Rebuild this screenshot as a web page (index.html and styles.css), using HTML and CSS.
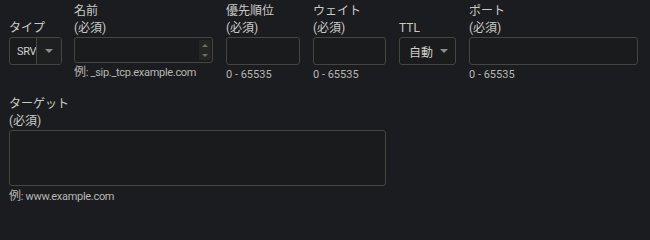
FILE: index.html
```html
<!DOCTYPE html>
<html lang="ja">
<head>
<meta charset="utf-8">
<link rel="stylesheet" href="styles.css">
</head>
<body>
<div class="form">
  <div class="row">
    <div class="field f-type">
      <div class="label"><span>タイプ</span></div>
      <div class="select split">
        <span class="sel-text">SRV</span>
        <span class="sel-btn"><span class="tri"></span></span>
      </div>
    </div>
    <div class="field f-name">
      <div class="label"><span>名前</span><span>(必須)</span></div>
      <div class="input num">
        <span class="spin"><span class="up"></span><span class="down"></span></span>
      </div>
      <div class="hint long"><span class="cjk">例</span>: _sip._tcp.example.com</div>
    </div>
    <div class="field f-prio">
      <div class="label"><span>優先順位</span><span>(必須)</span></div>
      <div class="input tall"></div>
      <div class="hint">0 - 65535</div>
    </div>
    <div class="field f-weight">
      <div class="label"><span>ウェイト</span><span>(必須)</span></div>
      <div class="input tall"></div>
      <div class="hint">0 - 65535</div>
    </div>
    <div class="field f-ttl">
      <div class="label"><span>TTL</span></div>
      <div class="select plain">
        <span class="sel-text">自動</span>
        <span class="tri"></span>
      </div>
    </div>
    <div class="field f-port">
      <div class="label"><span>ポート</span><span>(必須)</span></div>
      <div class="input tall"></div>
      <div class="hint">0 - 65535</div>
    </div>
  </div>
  <div class="field f-target">
    <div class="label"><span>ターゲット</span><span>(必須)</span></div>
    <div class="textarea"></div>
    <div class="hint long"><span class="cjk">例</span>: www.example.com</div>
  </div>
</div>
</body>
</html>
```

FILE: styles.css
```css
html, body {
  margin: 0;
  padding: 0;
  background: #1b1c1f;
}
body {
  width: 650px;
  height: 210px;
  overflow: hidden;
  font-family: Roboto, "Noto Sans CJK JP", sans-serif;
  font-size: 12px;
  color: #c9c9c6;
}
.form {
  padding: 2px 9px 0 9px;
}
.row {
  display: flex;
  align-items: flex-start;
}
.field {
  display: flex;
  flex-direction: column;
}
.label {
  height: 35px;
  display: flex;
  flex-direction: column;
  justify-content: flex-end;
  line-height: 17px;
  color: #cacac7;
}
.f-type { width: 53px; }
.f-name { width: 139px; margin-left: 12px; }
.f-prio { width: 74px; margin-left: 13px; }
.f-weight { width: 73px; margin-left: 13px; }
.f-ttl { width: 57px; margin-left: 13px; }
.f-port { width: 169px; margin-left: 13px; }

.input, .select, .textarea {
  box-sizing: border-box;
  border: 1px solid #46453f;
  border-radius: 3px;
  background: #1a1b1d;
}
.input { height: 26px; }
.input.tall { height: 28px; }
.select {
  height: 28px;
  display: flex;
  align-items: center;
}
.select.split {
  overflow: hidden;
}
.split .sel-text {
  margin-left: 7px;
  margin-right: 0;
  white-space: nowrap;
  color: #d0d0cc;
  font-size: 11px;
  letter-spacing: -0.3px;
}
.split .sel-btn {
  flex: 1;
  align-self: stretch;
  border-left: 1px solid #46453f;
  background: #1e1f21;
  display: flex;
  align-items: center;
  justify-content: center;
}
.tri {
  width: 0;
  height: 0;
  border-left: 4px solid transparent;
  border-right: 4px solid transparent;
  border-top: 4px solid #8d8d8a;
}
.plain .sel-text {
  margin-left: 9px;
  width: 31px;
  color: #d0d0cc;
}
.num {
  display: flex;
  justify-content: flex-end;
  padding: 2px 1px 2px 0;
}
.spin {
  width: 12px;
  background: #252624;
  display: flex;
  flex-direction: column;
  justify-content: space-around;
  align-items: center;
}
.spin .up {
  width: 0; height: 0;
  border-left: 3px solid transparent;
  border-right: 3px solid transparent;
  border-bottom: 3px solid #6f6f6b;
}
.spin .down {
  width: 0; height: 0;
  border-left: 3px solid transparent;
  border-right: 3px solid transparent;
  border-top: 3px solid #6f6f6b;
}
.hint {
  margin-top: 2px;
  line-height: 15px;
  font-size: 11px;
  color: #b7b7b4;
  white-space: nowrap;
}
.hint.long {
  letter-spacing: -0.3px;
}
.hint .cjk {
  font-size: 12px;
}
.f-target {
  margin-top: 13px;
  width: 377px;
}
.textarea {
  height: 56px;
}
.f-target .hint {
  margin-top: 3px;
}
```
